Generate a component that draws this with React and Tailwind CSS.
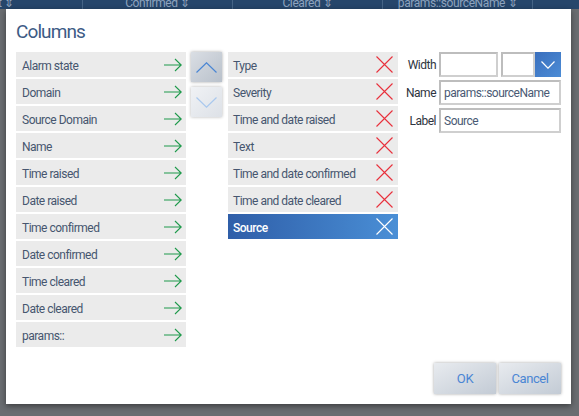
import React from 'react';

const available = [
  'Alarm state', 'Domain', 'Source Domain', 'Name', 'Time raised', 'Date raised',
  'Time confirmed', 'Date confirmed', 'Time cleared', 'Date cleared', 'params::',
];

const selected = [
  'Type', 'Severity', 'Time and date raised', 'Text',
  'Time and date confirmed', 'Time and date cleared', 'Source',
];

const Arrow = () => (
  <svg width="18" height="14" viewBox="0 0 18 14" fill="none" stroke="#1f9a4c" strokeWidth="1.1">
    <path d="M0 7H17.2M11 1L17.2 7L11 13" />
  </svg>
);

const Cross = ({ color }) => (
  <svg width="17" height="17" viewBox="0 0 17 17" fill="none" stroke={color} strokeWidth="1.1">
    <path d="M0.5 0.5L16.5 16.5M16.5 0.5L0.5 16.5" />
  </svg>
);

const Chevron = ({ up, color, w = 21, h = 11 }) => (
  <svg width={w} height={h} viewBox={`0 0 ${w} ${h}`} fill="none" stroke={color} strokeWidth="1.2">
    {up ? <path d={`M0.5 ${h - 0.5}L${w / 2} 0.8L${w - 0.5} ${h - 0.5}`} /> : <path d={`M0.5 0.5L${w / 2} ${h - 0.8}L${w - 0.5} 0.5`} />}
  </svg>
);

const Field = ({ value, className = '' }) => (
  <div className={`h-[25px] border-2 border-[#cfcfcf] border-t-[#bdbdbd] border-l-[#bdbdbd] bg-white flex items-center px-[3px] pt-[1px] text-[12px] text-[#4a5a74] tracking-[-0.5px] ${className}`}>
    {value}
  </div>
);

export default function App() {
  return (
    <div className="relative w-[579px] h-[416px] overflow-hidden bg-[#6a6d71] font-['Roboto',sans-serif]">
      {/* page behind the overlay, header row is cut by the dialog */}
      <div className="h-[9px] bg-[#26466b] flex text-[12px] leading-none text-[#8ea4bf] tracking-[-0.4px] overflow-hidden">
        <div className="w-[83px] border-r border-[#466587] flex items-end -mt-[4px]"><span className="-ml-[2px]">t ⇕</span></div>
        <div className="w-[150px] border-r border-[#466587] flex items-end justify-center -mt-[4px]">Confirmed ⇕</div>
        <div className="w-[150px] border-r border-[#466587] flex items-end justify-center -mt-[4px]">Cleared ⇕</div>
        <div className="w-[150px] border-r border-[#466587] flex items-end justify-center -mt-[4px]">params::sourceName ⇕</div>
      </div>

      {/* dialog */}
      <div className="absolute left-[6px] top-[9px] w-[565px] h-[395px] bg-white shadow-[0_2px_6px_rgba(0,0,0,0.45)] px-[10px] pt-[11px] pb-[10px] flex flex-col">
        <h1 className="text-[19px] leading-[24px] text-[#3d5b85] tracking-[-0.9px]">Columns</h1>

        <div className="mt-[8px] flex items-start">
          <div className="w-[170px] flex flex-col gap-[2px]">
            {available.map((name) => (
              <div key={name} className="h-[25px] bg-[#ebebeb] flex items-center justify-between pl-[6px] pr-[4px] text-[12px] text-[#46566f] tracking-[-0.5px]">
                <span className="pt-[2px]">{name}</span>
                <Arrow />
              </div>
            ))}
          </div>

          <div className="ml-[5px] w-[31px] flex flex-col gap-[5px]">
            <div className="h-[30px] bg-gradient-to-br from-[#dadee4] to-[#b9c1cb] shadow-[0_0_3px_rgba(0,0,0,0.35)] flex items-center justify-center">
              <Chevron up color="#4a86d4" />
            </div>
            <div className="h-[30px] bg-gradient-to-br from-[#f0f2f5] to-[#dde1e7] shadow-[0_0_3px_rgba(0,0,0,0.3)] flex items-center justify-center">
              <Chevron color="#a9c8ee" />
            </div>
          </div>

          <div className="ml-[6px] w-[170px] flex flex-col gap-[2px]">
            {selected.map((name) => {
              const active = name === 'Source';
              return (
                <div
                  key={name}
                  className={`h-[25px] flex items-center justify-between pl-[5px] pr-[5px] text-[12px] tracking-[-0.5px] ${
                    active ? 'bg-gradient-to-r from-[#2f5ea8] to-[#4a8fd6] text-white font-medium' : 'bg-[#ebebeb] text-[#46566f]'
                  }`}
                >
                  <span className="pt-[2px]">{name}</span>
                  <Cross color={active ? '#ffffff' : '#e8313c'} />
                </div>
              );
            })}
          </div>

          <div className="flex-1 flex flex-col gap-[3px] text-[12px] text-[#2e3440] tracking-[-0.5px]">
            <div className="flex items-center">
              <span className="w-[38px] text-right pt-[1px]">Width</span>
              <Field value="" className="ml-[3px] w-[59px]" />
              <Field value="" className="ml-[3px] w-[34px]" />
              <div className="w-[26px] h-[25px] bg-gradient-to-br from-[#3a6fbd] to-[#4c8cd6] flex items-center justify-center">
                <Chevron color="#ffffff" w={14} h={8} />
              </div>
            </div>
            <div className="flex items-center">
              <span className="w-[38px] text-right pt-[1px]">Name</span>
              <Field value="params::sourceName" className="ml-[3px] w-[122px]" />
            </div>
            <div className="flex items-center">
              <span className="w-[38px] text-right pt-[1px]">Label</span>
              <Field value="Source" className="ml-[3px] w-[122px]" />
            </div>
          </div>
        </div>

        <div className="mt-auto flex justify-end gap-[3px]">
          {['OK', 'Cancel'].map((b) => (
            <button key={b} className="w-[62px] h-[31px] bg-gradient-to-br from-[#e8ebef] to-[#c3cbd5] shadow-[0_0_3px_rgba(0,0,0,0.35)] text-[13px] text-[#4a86d4] tracking-[-0.4px]">
              {b}
            </button>
          ))}
        </div>
      </div>
    </div>
  );
}
